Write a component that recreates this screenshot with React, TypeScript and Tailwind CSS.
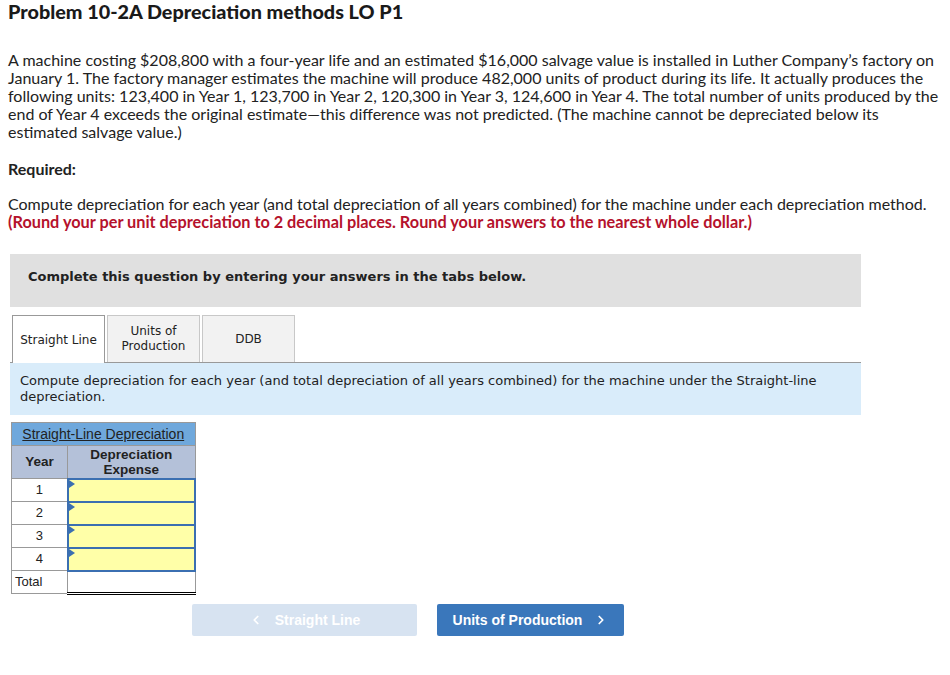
import { FC } from 'react';
import { ChevronLeft, ChevronRight } from 'lucide-react';

const years = [1, 2, 3, 4];

const InputCell: FC = () => (
    <td className="relative h-[23px] border-2 border-[#3b6fb1] bg-[#ffffa8] p-0">
        <span className="absolute left-0 top-0 h-0 w-0 border-y-[4px] border-l-[6px] border-y-transparent border-l-[#3b6fb1]"></span>
    </td>
);

const App: FC = () => {
    return (
        <div className="min-h-[675px] w-[950px] bg-white text-[#222]">
            <div className="px-2 font-['Lato',sans-serif]">
                <h1 className="text-[19.8px] font-black leading-[22px] text-[#1a1a1a]">Problem 10-2A Depreciation methods LO P1</h1>
                <p className="mt-[29px] whitespace-nowrap text-[16px] leading-[18px]">
                    A machine costing $208,800 with a four-year life and an estimated $16,000 salvage value is installed in Luther Company’s factory on
                    <br />
                    January 1. The factory manager estimates the machine will produce 482,000 units of product during its life. It actually produces the
                    <br />
                    following units: 123,400 in Year 1, 123,700 in Year 2, 120,300 in Year 3, 124,600 in Year 4. The total number of units produced by the
                    <br />
                    end of Year 4 exceeds the original estimate—this difference was not predicted. (The machine cannot be depreciated below its
                    <br />
                    estimated salvage value.)
                </p>
                <p className="mt-[19px] text-[16px] font-bold leading-[18px]">Required:</p>
                <p className="mt-[17px] whitespace-nowrap text-[16px] leading-[18px]">
                    Compute depreciation for each year (and total depreciation of all years combined) for the machine under each depreciation method.
                </p>
                <p className="whitespace-nowrap text-[16.3px] font-bold leading-[18px] text-[#b5122c]">
                    (Round your per unit depreciation to 2 decimal places. Round your answers to the nearest whole dollar.)
                </p>
            </div>

            <div className="ml-[10px] mt-[23px] w-[851px] font-['DejaVu_Sans',Verdana,sans-serif]">
                <div className="h-[53px] bg-[#e0e0e0] pl-[18px] pt-[15px] text-[13px] font-bold leading-[16px]">
                    Complete this question by entering your answers in the tabs below.
                </div>

                <div className="mt-[8px] flex h-[48px] items-end border-b border-[#999]">
                    <div className="z-10 -mb-px ml-[2px] flex h-[48px] w-[93px] items-center justify-center border border-b-0 border-[#999] bg-white text-[12px]">
                        Straight Line
                    </div>
                    <div className="ml-[2px] flex h-[47px] w-[93px] items-center justify-center border border-b-0 border-[#c8c8c8] bg-[#f2f2f2] text-center text-[12px] leading-[15px]">
                        Units of
                        <br />
                        Production
                    </div>
                    <div className="ml-[2px] flex h-[47px] w-[93px] items-center justify-center border border-b-0 border-[#c8c8c8] bg-[#f2f2f2] text-[12px]">
                        DDB
                    </div>
                </div>

                <div className="h-[52px] bg-[#d9ecfa] px-[10px] pt-[10px] text-[13px] leading-[16px]">
                    Compute depreciation for each year (and total depreciation of all years combined) for the machine under the Straight-line
                    depreciation.
                </div>

                <table className="ml-px mt-[7px] w-[185px] border-collapse font-['Liberation_Sans',Arial,sans-serif] text-[13px] text-[#222]">
                    <thead>
                        <tr>
                            <th colSpan={2} className="h-[23px] border border-[#999] bg-[#6fa8dc] p-0 text-[14px] font-normal underline">
                                Straight-Line Depreciation
                            </th>
                        </tr>
                        <tr>
                            <th className="h-[33px] w-[56px] border border-[#999] bg-[#b4c1d9] p-0 text-[13.5px] font-bold">Year</th>
                            <th className="border border-[#999] bg-[#b4c1d9] p-0 text-[13.5px] font-bold leading-[15px]">
                                Depreciation
                                <br />
                                Expense
                            </th>
                        </tr>
                    </thead>
                    <tbody>
                        {years.map((y) => (
                            <tr key={y}>
                                <td className="h-[23px] border border-[#999] p-0 text-center">{y}</td>
                                <InputCell />
                            </tr>
                        ))}
                        <tr>
                            <td className="h-[23px] border border-[#999] px-[3px] py-0">Total</td>
                            <td className="border border-b-[3px] border-[#999] border-b-black [border-bottom-style:double] p-0"></td>
                        </tr>
                    </tbody>
                </table>

                <div className="mt-[9px] flex gap-[20px] pl-[182px] font-['Liberation_Sans',Arial,sans-serif] text-[14px] font-bold text-white">
                    <button className="flex h-[32px] w-[225px] items-center justify-center gap-[12px] rounded-[2px] bg-[#d7e3f1]">
                        <ChevronLeft size={14} strokeWidth={3} />
                        Straight Line
                    </button>
                    <button className="flex h-[32px] w-[187px] items-center justify-center gap-[12px] rounded-[2px] bg-[#3a77bb]">
                        Units of Production
                        <ChevronRight size={14} strokeWidth={3} />
                    </button>
                </div>
            </div>
        </div>
    );
};

export default App;
